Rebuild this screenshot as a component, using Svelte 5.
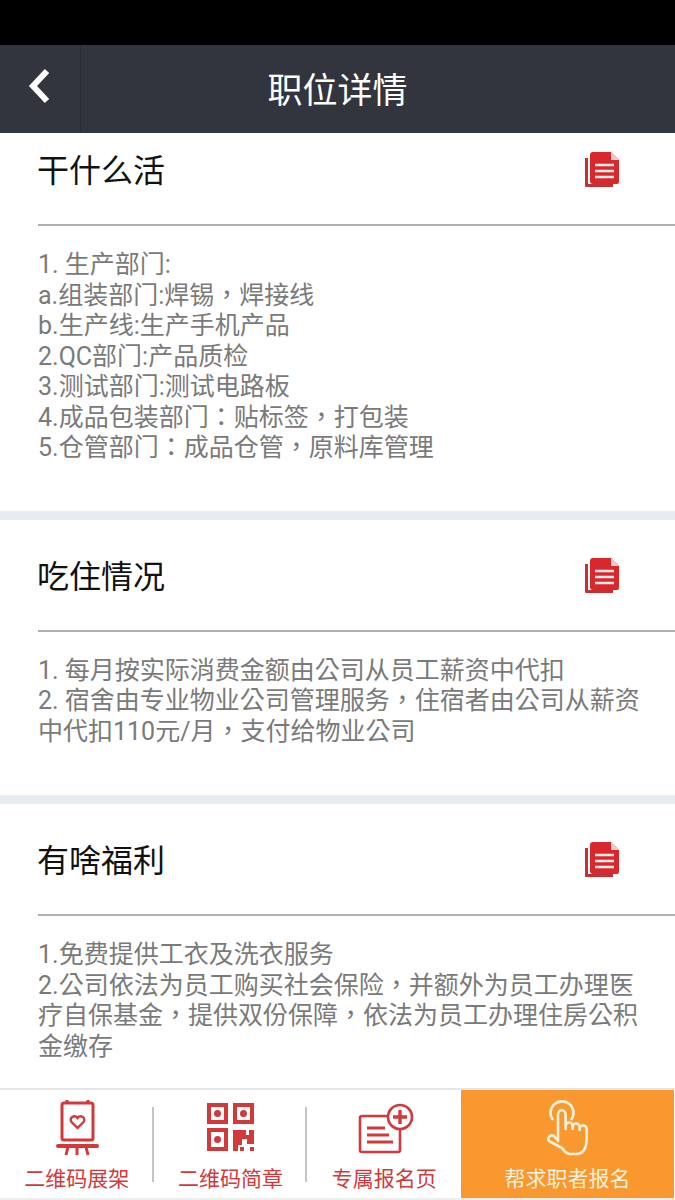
<script>
  const sections = [
    {
      title: '干什么活',
      first: true,
      lines: ['1. 生产部门:', 'a.组装部门:焊锡，焊接线', 'b.生产线:生产手机产品', '2.QC部门:产品质检', '3.测试部门:测试电路板', '4.成品包装部门：贴标签，打包装', '5.仓管部门：成品仓管，原料库管理']
    },
    {
      title: '吃住情况',
      lines: ['1. 每月按实际消费金额由公司从员工薪资中代扣', '2. 宿舍由专业物业公司管理服务，住宿者由公司从薪资中代扣110元/月，支付给物业公司']
    },
    {
      title: '有啥福利',
      lines: ['1.免费提供工衣及洗衣服务', '2.公司依法为员工购买社会保险，并额外为员工办理医疗自保基金，提供双份保障，依法为员工办理住房公积金缴存']
    }
  ]
</script>

<div class="page">
  <div class="status"></div>
  <header class="nav">
    <div class="back">
      <svg width="24" height="36" viewBox="0 0 24 36"><path d="M19 3 5 18l14 15" fill="none" stroke="#fff" stroke-width="6" /></svg>
    </div>
    <h1>职位详情</h1>
    <div></div>
  </header>

  <main class="content">
    {#each sections as s}
      <section class:first={s.first}>
        <div class="head">
          <h2>{s.title}</h2>
          <svg class="doc" width="34" height="36" viewBox="0 0 34 36">
            <path d="M0 6v28a1 1 0 0 0 1 1h27v-3H3V6z" fill="#c23234" />
            <path d="M8 0h18l8 8v22a2 2 0 0 1-2 2H8a3 3 0 0 1-3-3V3a3 3 0 0 1 3-3z" fill="#d9282b" />
            <path d="M26 0l8 8h-8z" fill="#f8c9c9" />
            <path d="M10 13h19M10 19h19M10 25h19" stroke="#fdeaea" stroke-width="2.6" />
          </svg>
        </div>
        <div class="body">
          {#each s.lines as line}
            <p>{line}</p>
          {/each}
        </div>
      </section>
    {/each}
  </main>

  <footer class="tabs">
    <div class="tab">
      <svg width="64" height="60" viewBox="0 0 64 60" fill="none" stroke="#d2393b" stroke-width="3">
        <rect x="17" y="6" width="31" height="37" rx="2" />
        <path d="M22 3v4M43 3v4" />
        <path d="M13 49h39" stroke-width="4" stroke-linecap="round" />
        <path d="M23 50l-2 8M32 50v8M41 50l2 8" />
        <path d="M32.5 31l-6-6c-3-4 3-8 6-4 3-4 9 0 6 4z" stroke-width="2.4" />
      </svg>
      <span>二维码展架</span>
    </div>
    <div class="tab">
      <svg width="64" height="60" viewBox="0 0 64 60" fill="#d2393b">
        <path fill-rule="evenodd" d="M9 6h21v21H9zM13 10v13h13V10zM35 6h21v21H35zM39 10v13h13V10zM9 31h21v23H9zM13 35v15h13V35z" />
        <circle cx="19.5" cy="16.500" r="3.500" />
        <circle cx="45.500" cy="16.500" r="3.500" />
        <circle cx="19.500" cy="42.500" r="3.500" />
        <path d="M35 33h13v5h3v-5h5v14h-7v-5h-5v6h-4v6h-5z" />
        <rect x="42" y="50" width="4" height="4" />
        <rect x="52" y="50" width="4" height="4" />
      </svg>
      <span>二维码简章</span>
    </div>
    <div class="tab">
      <svg width="64" height="60" viewBox="0 0 64 60" fill="none" stroke="#d2393b" stroke-width="2.6">
        <path d="M37 19H10a2 2 0 0 0-2 2v32a2 2 0 0 0 2 2h36a2 2 0 0 0 2-2V33" />
        <path d="M15 31h18M15 38h22M15 45h26" stroke-width="3" />
        <circle cx="48" cy="20" r="12" />
        <path d="M48 13v14M41 20h14" stroke-width="3.400" />
      </svg>
      <span>专属报名页</span>
    </div>
    <div class="tab action">
      <svg class="hand" width="64" height="60" viewBox="0 0 64 60" fill="none" stroke="#fdf0dd" stroke-width="2.600" stroke-linejoin="round">
        <path d="M18 21a11.500 11.500 0 1 1 18 0" />
        <path d="M23 42V15a3.800 3.800 0 0 1 7.600 0v15-3a3.500 3.500 0 0 1 7 0v3-2a3.500 3.500 0 0 1 7 0v3-1a3.500 3.500 0 0 1 7 0v10c0 8-3 14-9 15H34c-3-1-5-3-7-6L14 42c-2-3 1-7 5-5z" />
      </svg>
      <span>帮求职者报名</span>
    </div>
  </footer>
</div>

<style>
  :global(body) {
    margin: 0;
    background: #fff;
  }

  .page {
    display: flex;
    flex-direction: column;
    height: 1200px;
    overflow: hidden;
    background: #eeeeee;
    font-family: "Roboto", "Noto Sans CJK SC", sans-serif;
  }

  .status {
    height: 45px;
    background: #000;
    flex-shrink: 0;
  }

  .nav {
    display: grid;
    grid-template-columns: 81px 1fr 81px;
    align-items: center;
    height: 88px;
    flex-shrink: 0;
    background: #32343e;
  }

  .back {
    height: 100%;
    display: flex;
    align-items: center;
    padding-left: 28px;
    padding-bottom: 6px;
    box-sizing: border-box;
    border-right: 1px solid #2b2d36;
  }

  .nav h1 {
    margin: 6px 0 0;
    text-align: center;
    color: #fff;
    font-size: 35px;
    font-weight: 400;
    line-height: 82px;
  }

  .content {
    flex: 1;
    overflow: hidden;
    background: #fff;
  }

  section {
    padding-left: 38px;
    border-bottom: 9px solid #e8ecf0;
  }

  .head {
    display: flex;
    justify-content: space-between;
    align-items: center;
    padding: 36px 56px 34px 0;
    border-bottom: 2px solid #b0b0b0;
    height: 40px;
  }

  .first .head {
    padding-top: 17px;
  }

  .head h2 {
    margin: 2px 0 0 -1px;
    color: #111;
    font-size: 32px;
    font-weight: 400;
    line-height: 38px;
  }

  .body {
    padding: 24px 34px 48px 0;
    color: #7a7a7a;
    font-family: "Roboto", "Noto Sans CJK TC", sans-serif;
    font-size: 25px;
    line-height: 30.500px;
  }

  .first .body {
    padding-bottom: 47px;
  }

  .body p {
    margin: 0;
  }

  .tabs {
    display: flex;
    height: 108px;
    flex-shrink: 0;
    margin-bottom: 2px;
    border-top: 2px solid #e6e6e6;
    background: #fff;
  }

  .tab {
    position: relative;
    display: flex;
    flex-direction: column;
    align-items: center;
    width: 153.667px;
    padding-top: 7px;
    box-sizing: border-box;
    color: #d2393b;
    font-size: 21px;
    line-height: 30px;
  }

  .tab span {
    margin-top: 7px;
  }

  .tab:not(.action)::after {
    content: '';
    position: absolute;
    right: 0;
    top: 17px;
    width: 2px;
    height: 75px;
    background: #c4c4c4;
  }

  .tab:nth-child(3)::after {
    display: none;
  }

  .action {
    flex: 1;
    margin-right: 1px;
    background: #f9982f;
    color: #fdf0dd;
  }

  .hand {
    margin: 2px 0 -2px;
  }
</style>
